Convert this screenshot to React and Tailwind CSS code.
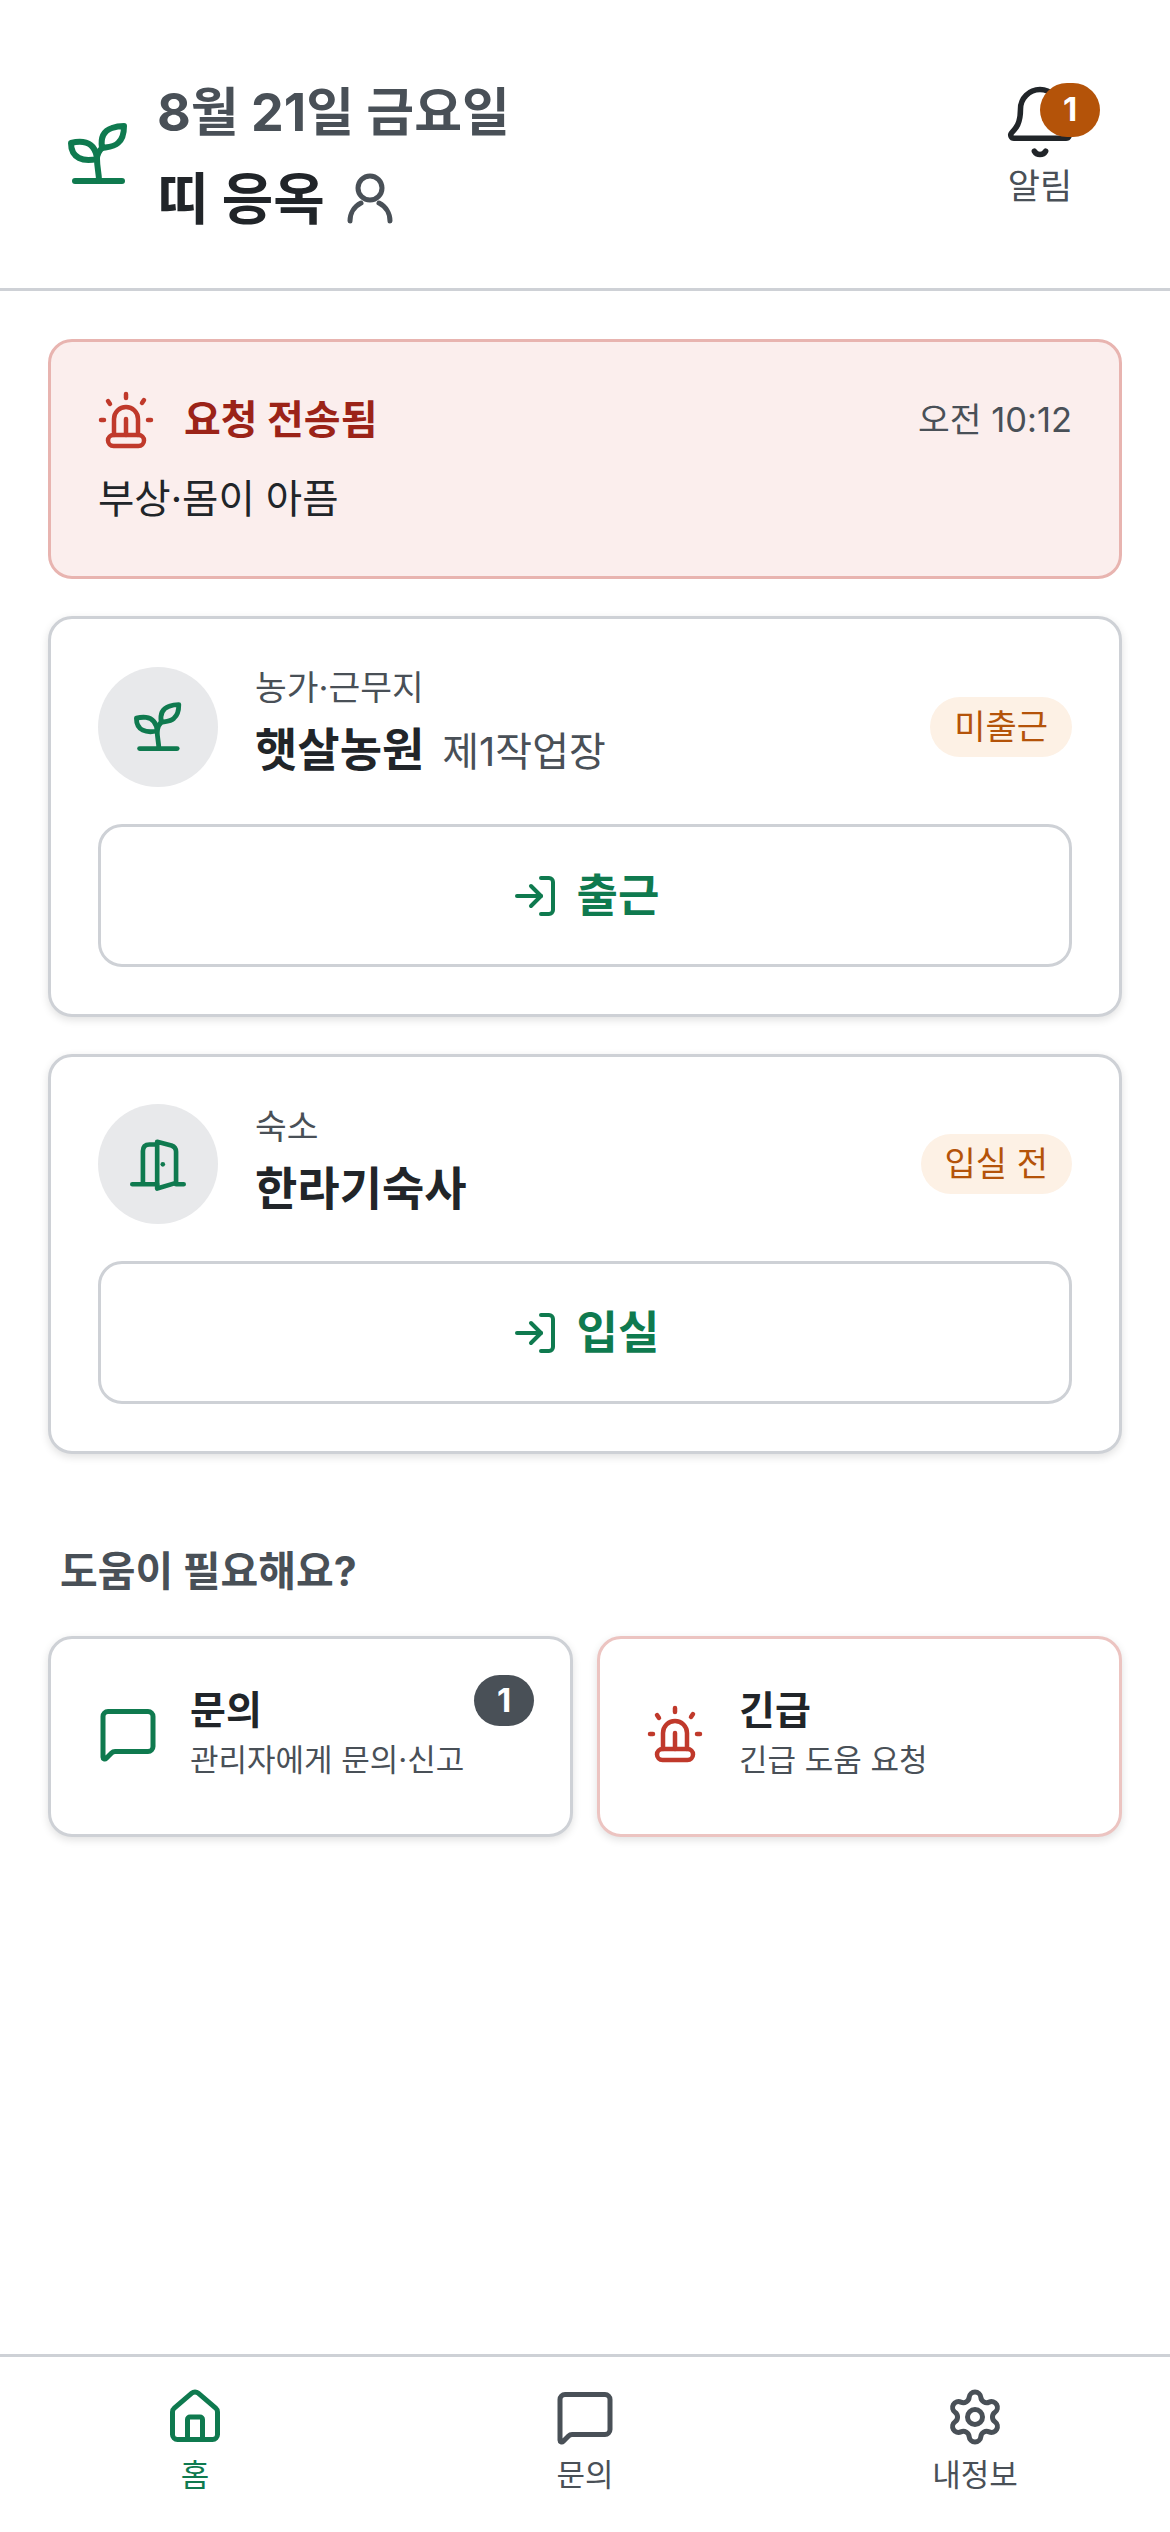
import React from 'react';
import { Bell, House, LogIn, MessageSquare, Settings } from 'lucide-react';

const font = { fontFamily: 'Inter, "Noto Sans CJK KR", sans-serif' };

const PlantIcon = ({ className }) => (
  <svg viewBox="0 0 60 62" fill="none" stroke="currentColor" strokeWidth="6" strokeLinecap="round" strokeLinejoin="round" className={className}>
    <path d="M7 58 H54" />
    <path d="M31 58 C31 50 29 45 29 36 C29 32 31 28 34 25" />
    <path d="M34 25 C32 12 38 7 44 5 C48 3.5 52 3 56 3 C56 10 55 16 50 20 C46 24 40 24 34 25 Z" />
    <path d="M29 36 C28 26 23 20 15 19 C11 18.5 7 19 3 20 C3 26 5 32 11 35 C17 38 24 37 29 36 Z" />
  </svg>
);

const SirenIcon = ({ className }) => (
  <svg viewBox="0 0 56 58" fill="none" stroke="currentColor" strokeWidth="4.5" strokeLinecap="round" strokeLinejoin="round" className={className}>
    <rect x="10" y="44" width="36" height="11" rx="5.5" />
    <path d="M16 44 V28 A12 12 0 0 1 40 28 V44" />
    <path d="M28 28 V44" />
    <path d="M28 3 V7 M10 10 L12 13 M46 9 L44 12 M3 29 H6 M50 29 H53" />
  </svg>
);

const DoorIcon = ({ className }) => (
  <svg viewBox="0 0 175 165" fill="none" stroke="currentColor" strokeWidth="14" strokeLinecap="round" strokeLinejoin="round" className={className}>
    <path d="M10 142 H85 M142 142 H165" />
    <path d="M42 138 V42 Q42 22 62 22 H84" />
    <path d="M85 155 V14 L128 25 Q142 30 142 44 V138 Z" />
    <circle cx="102" cy="82" r="7" fill="currentColor" stroke="none" />
  </svg>
);

const UserIcon = ({ className }) => (
  <svg viewBox="0 0 46 52" fill="none" stroke="currentColor" strokeWidth="5" strokeLinecap="round" className={className}>
    <circle cx="23" cy="15" r="12" />
    <path d="M3 48 A20 20 0 0 1 14 30 M43 48 A20 20 0 0 0 32 30" />
  </svg>
);

const PlaceCard = ({ icon, label, name, sub, status, action }) => (
  <div className="rounded-[24px] border-[3px] border-[#ced1d6] bg-white p-[47px] shadow-[0_3px_9px_rgba(0,0,0,0.12)]">
    <div className="flex items-center">
      <div className="flex h-[120px] w-[120px] shrink-0 items-center justify-center rounded-full bg-[#e8e9eb] text-[#0f7a4f]">
        {icon}
      </div>
      <div className="mb-[7px] ml-[37px] flex-1">
        <div className="text-[34.5px] leading-[44px] text-[#495057]">{label}</div>
        <div className="mt-[11px] flex items-baseline leading-[56px]">
          <span className="text-[46px] font-bold text-[#212529]">{name}</span>
          {sub && <span className="ml-[18px] text-[40px] text-[#495057]">{sub}</span>}
        </div>
      </div>
      <span className="rounded-full bg-[#fdf1e5] px-[24px] py-[8px] text-[34px] leading-[44px] text-[#b45309]">{status}</span>
    </div>
    <button className="mt-[37px] flex h-[143px] w-full items-center justify-center gap-[18px] rounded-[24px] border-[3px] border-[#ced1d6] bg-white text-[45px] font-bold text-[#0f7a4f]">
      <LogIn size={48} strokeWidth={2} />
      {action}
    </button>
  </div>
);

const HelpCard = ({ icon, title, desc, border, badge }) => (
  <div className={`relative flex h-[201px] flex-1 items-center rounded-[24px] border-[3px] ${border} bg-white pl-[47px] shadow-[0_3px_9px_rgba(0,0,0,0.12)]`}>
    <div className="mb-[6px] w-[60px] shrink-0">{icon}</div>
    <div className="mb-[6px] ml-[32px]">
      <div className="text-[39px] font-bold leading-[50px] text-[#212529]">{title}</div>
      <div className="mt-[3px] text-[31px] leading-[44px] text-[#495057]">{desc}</div>
    </div>
    {badge && (
      <span className="absolute right-[36px] top-[36px] flex h-[51px] w-[60px] items-center justify-center rounded-full bg-[#495057] text-[33px] font-bold text-white">{badge}</span>
    )}
  </div>
);

const NavItem = ({ icon, label, active }) => (
  <div className={`flex flex-1 flex-col items-center ${active ? 'text-[#0f7a4f]' : 'text-[#495057]'}`}>
    {icon}
    <span className="mt-[6px] text-[31px] leading-[44px]">{label}</span>
  </div>
);

export default function App() {
  return (
    <div className="flex h-[2532px] w-[1170px] flex-col bg-white" style={font}>
      <header className="flex h-[291px] items-center border-b-[3px] border-[#ced1d6] pl-[68px] pr-[91px] pt-[18px]">
        <PlantIcon className="mt-[2px] h-[62px] w-[60px] text-[#0f7a4f]" />
        <div className="ml-[29px] flex-1">
          <div className="mt-[6px] text-[52px] font-bold leading-[72px] text-[#495057]">8월 21일 금요일</div>
          <div className="mt-[14px] flex items-center text-[56px] font-bold leading-[72px] text-[#212529]">
            띠 응옥
            <UserIcon className="ml-[22px] h-[52px] w-[46px] text-[#495057]" />
          </div>
        </div>
        <div className="mb-[15px] flex flex-col items-center">
          <div className="relative">
            <Bell size={78} strokeWidth={1.7} className="text-[#212529]" />
            <span className="absolute left-[39px] top-0 flex h-[54px] w-[60px] items-center justify-center rounded-full bg-[#b45309] text-[33px] font-bold text-white">1</span>
          </div>
          <span className="mt-[3px] text-[35px] leading-[44px] text-[#495057]">알림</span>
        </div>
      </header>

      <main className="flex flex-1 flex-col px-[48px] pt-[48px]">
        <div className="h-[240px] rounded-[24px] border-[3px] border-[#e8b4b0] bg-[#fbeeed] px-[47px] pt-[48px]">
          <div className="flex items-center">
            <SirenIcon className="h-[58px] w-[56px] text-[#c0392b]" />
            <span className="ml-[30px] text-[40px] font-bold text-[#9b2318]">요청 전송됨</span>
            <span className="ml-auto text-[34.5px] text-[#495057]">오전 10:12</span>
          </div>
          <div className="mt-[23px] text-[39.5px] leading-[52px] text-[#212529]">부상·몸이 아픔</div>
        </div>

        <div className="mt-[37px] flex flex-col gap-[37px]">
          <PlaceCard
            icon={<PlantIcon className="h-[50px] w-[48px]" />}
            label="농가·근무지"
            name="햇살농원"
            sub="제1작업장"
            status="미출근"
            action="출근"
          />
          <PlaceCard
            icon={<DoorIcon className="h-[55px] w-[58px]" />}
            label="숙소"
            name="한라기숙사"
            status="입실 전"
            action="입실"
          />
        </div>

        <h2 className="ml-[12px] mt-[89px] text-[41px] font-bold leading-[56px] text-[#495057]">도움이 필요해요?</h2>

        <div className="mt-[37px] flex gap-[24px]">
          <HelpCard
            icon={<MessageSquare size={60} strokeWidth={2} className="text-[#0f7a4f]" />}
            title="문의"
            desc="관리자에게 문의·신고"
            border="border-[#ced1d6]"
            badge="1"
          />
          <HelpCard
            icon={<SirenIcon className="h-[58px] w-[56px] text-[#c0392b]" />}
            title="긴급"
            desc="긴급 도움 요청"
            border="border-[#ecc4c1]"
          />
        </div>
      </main>

      <nav className="flex h-[178px] border-t-[3px] border-[#ced1d6] pt-[30px]">
        <NavItem icon={<House size={60} strokeWidth={2} />} label="홈" active />
        <NavItem icon={<MessageSquare size={60} strokeWidth={2} />} label="문의" />
        <NavItem icon={<Settings size={60} strokeWidth={2} />} label="내정보" />
      </nav>
    </div>
  );
}
